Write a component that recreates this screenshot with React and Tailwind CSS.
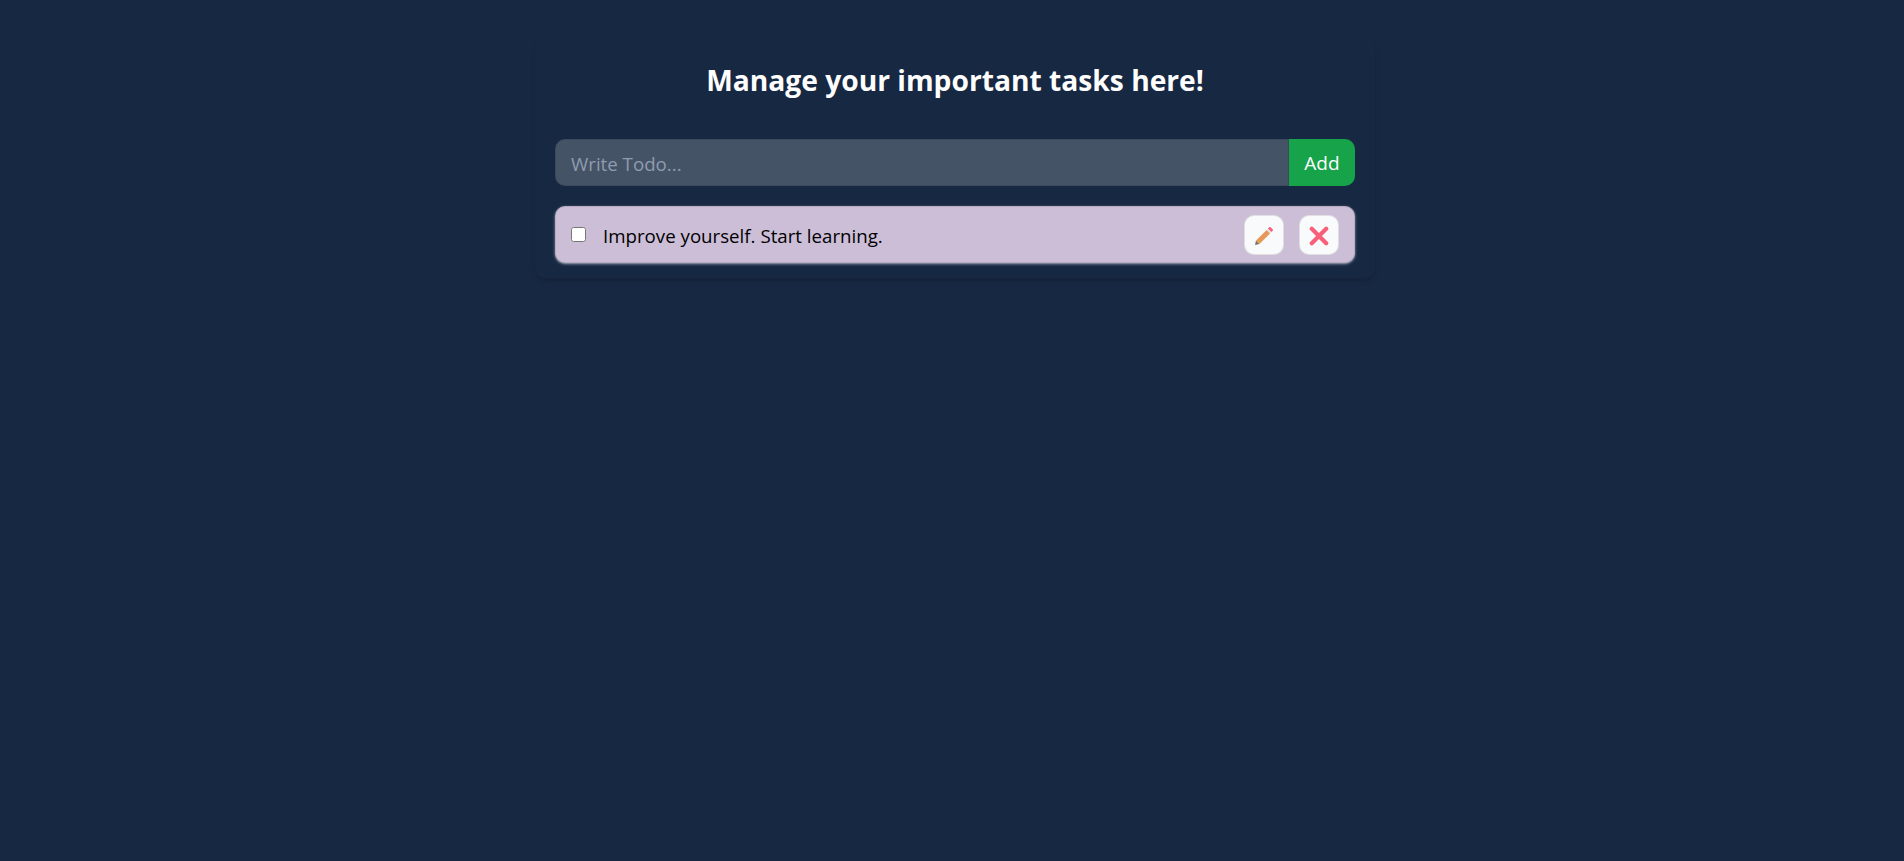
const FONT = "font-['Open_Sans',sans-serif]"

function PencilIcon() {
  return (
    <svg width="20" height="20" viewBox="0 0 20 20" aria-hidden="true" className="mt-[3px]">
      <path d="M1 19 L2 14.5 L5.5 18 Z" fill="#77716c" />
      <path d="M2 14.5 L12.6 3.9 L16.1 7.4 L5.5 18 Z" fill="#e2a14f" />
      <path d="M4.6 13.4 L13.6 4.9 L15 6.3 L6.2 15.2 Z" fill="#ee8f66" />
      <path d="M12.6 3.9 L14 2.5 L17.5 6 L16.1 7.4 Z" fill="#e4dfe4" />
      <path d="M14 2.5 L15.4 1.1 Q16 0.7 16.6 1.2 L18.8 3.4 Q19.3 4 18.8 4.6 L17.5 6 Z" fill="#f8607a" />
    </svg>
  )
}

function CrossIcon() {
  return (
    <svg width="20" height="20" viewBox="0 0 20 20" aria-hidden="true" className="mt-[3px]">
      <path d="M2.8 2.8 L17.2 17.2 M17.2 2.8 L2.8 17.2" stroke="#f8607a" strokeWidth="4.2" strokeLinecap="round" />
    </svg>
  )
}

export default function App() {
  return (
    <div className={`min-h-screen bg-[#172842] py-[40px] pl-[6px] ${FONT}`}>
      <div className="mx-auto w-[840px] rounded-[10px] px-[20px] py-[15px] text-white shadow-md">
        <h1 className="mb-[34px] text-center text-[28.2px] font-bold leading-[50px]">
          Manage your important tasks here!
        </h1>

        <div className="mb-[20px]">
          <form className="flex">
            <input
              type="text"
              placeholder="Write Todo..."
              className="w-full rounded-l-[10px] border border-black/10 bg-white/20 px-[15px] pb-[6.5px] pt-[8.5px] text-[18.7px] leading-[30px] outline-none placeholder:text-[#8f9cae]"
            />
            <button type="button" className="w-[66px] shrink-0 rounded-r-[10px] bg-[#16a34a] pt-[2px] text-[19px] text-white">
              Add
            </button>
          </form>
        </div>

        <div className="flex items-center gap-x-[16px] rounded-[10px] border border-black/10 bg-[#ccbed7] py-[7.5px] pl-[15px] pr-[15px] text-black shadow-sm shadow-white/50">
          <input type="checkbox" className="h-[15px] w-[15px] shrink-0" />
          <span className="mr-[-1px] mt-[2px] w-full pl-[1px] text-[18.7px] leading-[30px]">Improve yourself. Start learning.</span>
          <button className="flex h-[40px] w-[40px] shrink-0 items-center justify-center rounded-[10px] border border-black/10 bg-gray-50">
            <PencilIcon />
          </button>
          <button className="ml-[-1px] flex h-[40px] w-[40px] shrink-0 items-center justify-center rounded-[10px] border border-black/10 bg-gray-50">
            <CrossIcon />
          </button>
        </div>
      </div>
    </div>
  )
}
